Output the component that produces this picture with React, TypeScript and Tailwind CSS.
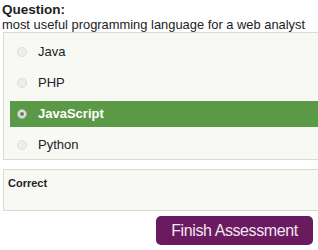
export default function App() {
  const options = ['Java', 'PHP', 'JavaScript', 'Python']
  const selected = 'JavaScript'

  return (
    <div className="h-[250px] w-[318px] overflow-hidden bg-white font-['Liberation_Sans',Arial,sans-serif] text-[#222]">
      {/* Question */}
      <div className="h-[32px] whitespace-nowrap pl-[2px] pt-[2px] leading-[15px]">
        <div className="text-[13.5px] font-bold">Question:</div>
        <div className="text-[12.9px]">most useful programming language for a web analyst</div>
      </div>

      {/* Options */}
      <div className="ml-[3px] w-[340px] border border-[#d9dccb] bg-[#f8f9f4] pb-[1px] pl-[6px] pt-[6px]">
        <div className="flex flex-col gap-[5px]">
          {options.map((opt) => {
            const active = opt === selected
            return (
              <div
                key={opt}
                className={
                  active
                    ? 'flex h-[26px] items-center bg-[#5a9a47] text-white'
                    : 'flex h-[26px] items-center text-[#222]'
                }
              >
                <span
                  className={
                    active
                      ? 'ml-[7px] flex h-[10px] w-[10px] items-center justify-center rounded-full border border-[#9fb59a] bg-[#dfe3dc]'
                      : 'ml-[7px] h-[10px] w-[10px] rounded-full border border-[#dcdcdc] bg-[#eeeeee]'
                  }
                >
                  {active && <span className="h-[4px] w-[4px] rounded-full bg-[#777]" />}
                </span>
                <span className={active ? 'ml-[11px] text-[13px] font-bold' : 'ml-[11px] text-[13px]'}>
                  {opt}
                </span>
              </div>
            )
          })}
        </div>
      </div>

      {/* Feedback */}
      <div className="ml-[3px] mt-[9px] h-[42px] w-[340px] border border-[#d9dccb] bg-[#f8f9f4] px-[4px] pt-[6px] text-[11px] font-bold leading-[14px]">
        Correct
      </div>

      {/* Finish */}
      <div className="mt-[5px] flex justify-end pr-[5px]">
        <button className="h-[29px] w-[157px] rounded-[5px] bg-[#6a1b5f] text-[16px] leading-[29px] tracking-[-0.4px] text-[#f4e6f1]">
          Finish Assessment
        </button>
      </div>
    </div>
  )
}
